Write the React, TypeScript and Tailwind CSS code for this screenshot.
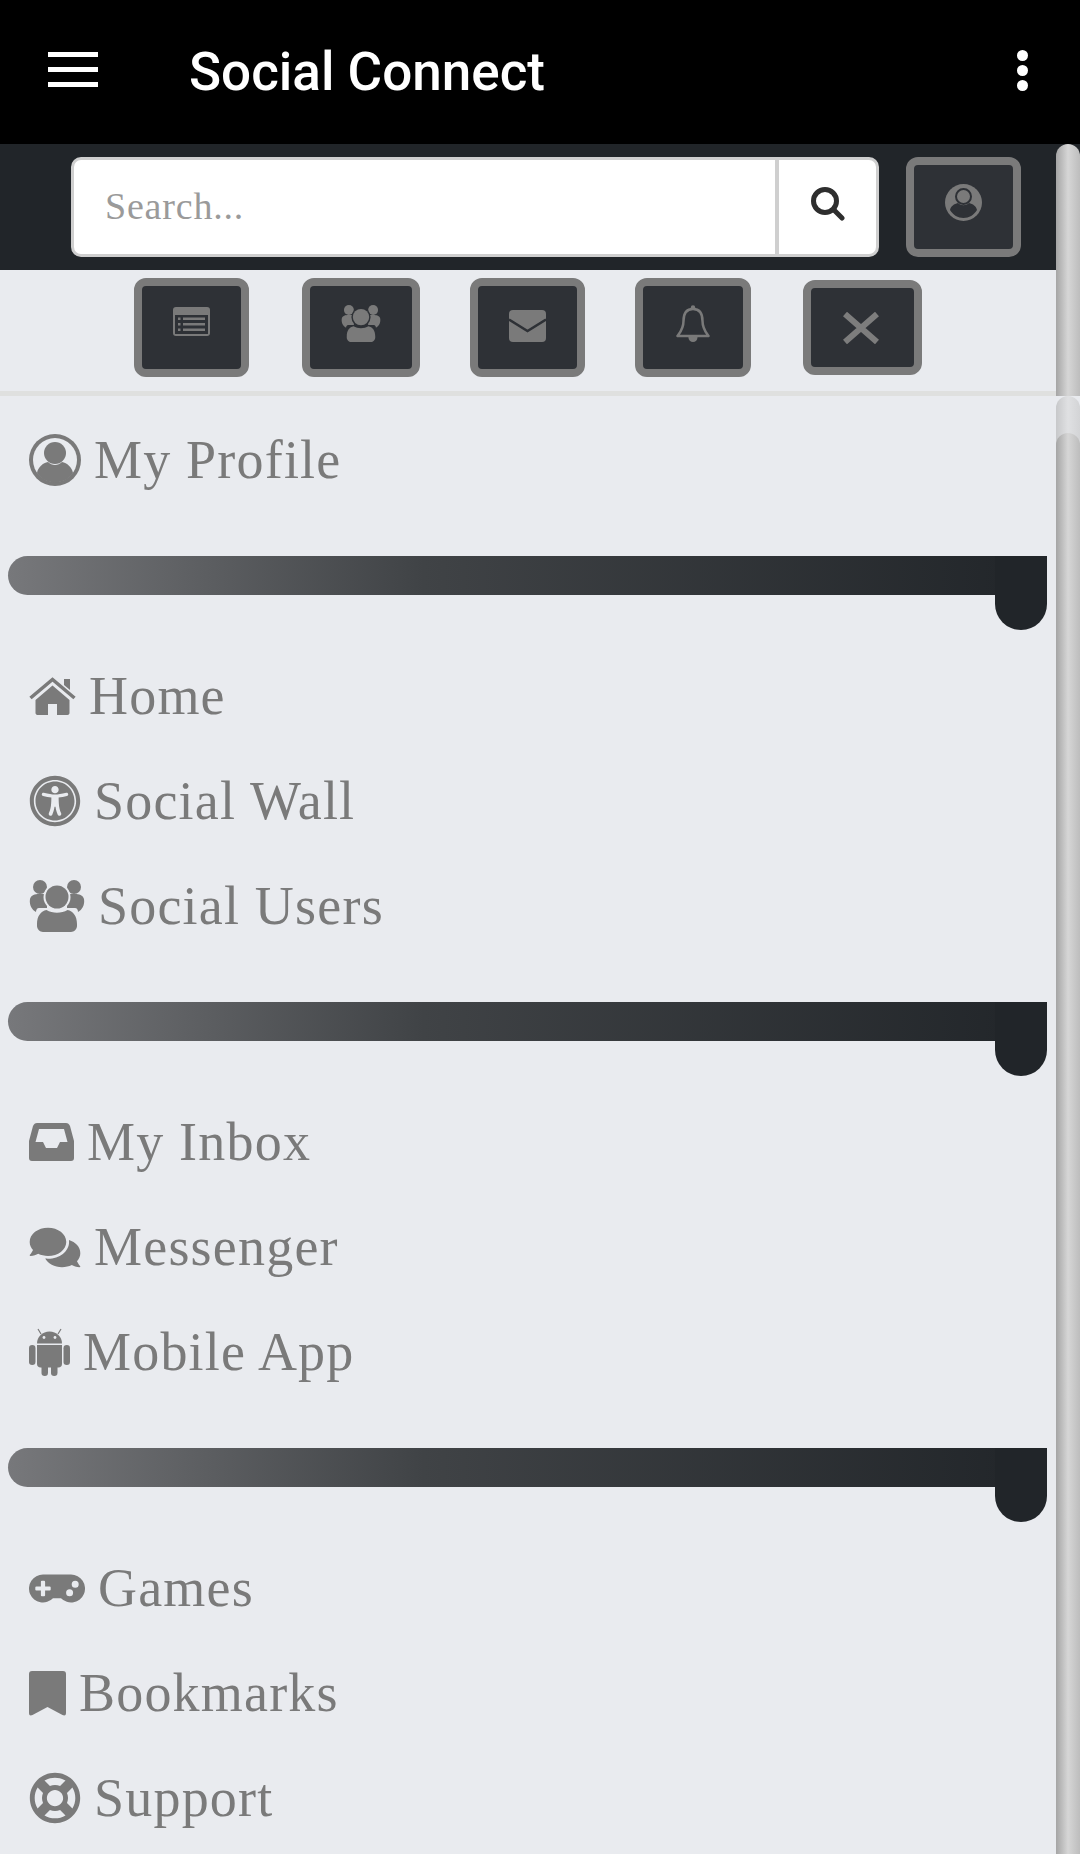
import React from "react";
import { FaUniversalAccess, FaComments, FaGamepad, FaRegLifeRing } from "react-icons/fa";

type P = { className?: string; gap?: string };

const PAGE = "#e9ebef";
const BTN = "#2e3136";

const Users = ({ className, gap = PAGE }: P) => (
  <svg viewBox="0 0 56 52" className={className} fill="currentColor">
    <circle cx="11" cy="7" r="7" />
    <circle cx="45" cy="7" r="7" />
    <path d="M1 19c1-4 5-5 9-5h8v14H10c-2 0-3 2-3 4-4-2-7-7-6-13zM55 19c-1-4-5-5-9-5h-8v14h8c2 0 3 2 3 4 4-2 7-7 6-13z" />
    <circle cx="28" cy="17" r="13.500" fill={gap} />
    <circle cx="28" cy="17" r="11.500" />
    <path d="M6 50V42c0-8 5-13 11-14 6 4 16 4 22 0 6 1 11 6 11 14v8z" fill={gap} />
    <path d="M8 44c0-8 4-13 9.500-14 6 3.500 15 3.500 21 0 5.500 1 9.500 6 9.500 14v2c0 3-3 6-6 6H14c-3 0-6-3-6-6z" />
  </svg>
);

const ListCard = ({ className, gap = BTN }: P) => (
  <svg viewBox="0 0 37 29" className={className}>
    <rect width="37" height="29" rx="3" fill="currentColor" />
    <rect x="2" y="8" width="33" height="19" fill={gap} />
    <g fill="currentColor">
      <rect x="5" y="10.500" width="2.500" height="2.500" />
      <rect x="5" y="16" width="2.500" height="2.500" />
      <rect x="5" y="21.500" width="2.500" height="2.500" />
      <rect x="10" y="10.500" width="22" height="2.500" />
      <rect x="10" y="16" width="22" height="2.500" />
      <rect x="10" y="21.500" width="22" height="2.500" />
    </g>
  </svg>
);

const Profile = ({ className, gap = PAGE }: P) => (
  <svg viewBox="0 0 52 52" className={className} fill="currentColor">
    <circle cx="26" cy="26" r="26" />
    <circle cx="26" cy="26" r="22" fill={gap} />
    <circle cx="26" cy="19" r="11" />
    <path d="M8 39c1-6 6-10 11-11 4 4 10 4 14 0 5 1 10 5 11 11-4 6-11 9.500-18 9.500S12 45 8 39z" />
  </svg>
);

const ProfileSmall = ({ className, gap = BTN }: P) => (
  <svg viewBox="0 0 37 37" className={className}>
    <circle cx="18.500" cy="18.500" r="18.500" fill="currentColor" />
    <circle cx="18.500" cy="12.500" r="7.500" fill="none" stroke={gap} strokeWidth="2" />
    <path d="M5 26c1-4 4-6 8-7 3 3 8 3 11 0 4 1 7 3 8 7-3 5-8 8-13.500 8S8 31 5 26z" fill={gap} />
  </svg>
);

const Home = ({ className }: P) => (
  <svg viewBox="0 0 47 38" className={className} fill="currentColor">
    <path d="M35 2h6v11l-6-5z" />
    <path d="M1.500 21L23.500 2.500l22 18.500" fill="none" stroke="currentColor" strokeWidth="3.500" />
    <path d="M6.500 23L23.500 8.500 40.500 23v13c0 1-1 2-2 2H28V27h-9v11H8.500c-1 0-2-1-2-2z" />
  </svg>
);

const Inbox = ({ className }: P) => (
  <svg viewBox="0 0 45 38" className={className} fill="currentColor">
    <path
      fillRule="evenodd"
      d="M8 0h29c2 0 3 1 4 3l4 15v17c0 2-1 3-3 3H3c-2 0-3-1-3-3V18L4 3c1-2 2-3 4-3zM10 6L6.500 19H14l3 6h11l3-6h7.500L35 6z"
    />
  </svg>
);

const Android = ({ className, gap = PAGE }: P) => (
  <svg viewBox="0 0 41 48" className={className} fill="currentColor">
    <path d="M12 6L9 1M29 6l3-5" stroke="currentColor" strokeWidth="1.200" />
    <path d="M8 15.500C8 8.500 13.500 3.500 20.500 3.500S33 8.500 33 15.500z" />
    <circle cx="15" cy="9.500" r="1.400" fill={gap} />
    <circle cx="26" cy="9.500" r="1.400" fill={gap} />
    <rect x="0" y="17" width="6.500" height="20" rx="3.200" />
    <rect x="34.500" y="17" width="6.500" height="20" rx="3.200" />
    <path d="M8 17h25v19c0 2-1.500 3.500-3.500 3.500h-18C9.500 39.500 8 38 8 36z" />
    <rect x="12.500" y="36" width="6.500" height="12" rx="3.200" />
    <rect x="22" y="36" width="6.500" height="12" rx="3.200" />
  </svg>
);

const Bookmark = ({ className }: P) => (
  <svg viewBox="0 0 37 45" className={className} fill="currentColor">
    <path d="M3 0h31c2 0 3 1 3 3v39c0 2.500-1.500 3-3.500 2L18.500 36 3.500 44C1.500 45 0 44.500 0 42V3c0-2 1-3 3-3z" />
  </svg>
);

const Envelope = ({ className, gap = BTN }: P) => (
  <svg viewBox="0 0 37 32" className={className}>
    <rect width="37" height="32" rx="4" fill="currentColor" />
    <path d="M0 9.500L18.500 21 37 9.500" fill="none" stroke={gap} strokeWidth="2.500" />
  </svg>
);

const Bell = ({ className }: P) => (
  <svg viewBox="0 0 34 37" className={className}>
    <circle cx="17" cy="2.500" r="2.200" fill="currentColor" />
    <circle cx="17" cy="32.500" r="4.500" fill="currentColor" />
    <path
      d="M17 4C10 4 7.500 9.500 7.500 16 7.500 24 3.500 28 1.500 31h31c-2-3-6-7-6-15 0-6.500-2.500-12-9.500-12z"
      fill={BTN}
      stroke="currentColor"
      strokeWidth="2.500"
      strokeLinejoin="round"
    />
  </svg>
);

const SideButton = ({ children, className }: { children: React.ReactNode; className: string }) => (
  <button className={`flex items-center justify-center rounded-[12px] border-[8px] border-[#7a7a7a] bg-[#2e3136] text-[#7a7a7a] ${className}`}>
    {children}
  </button>
);

const Divider = () => (
  <div className="relative ml-2 h-[39px] w-[1039px] rounded-l-[20px] bg-gradient-to-r from-[#77787b] via-[#404346] via-40% to-[#212529]">
    <div className="absolute right-0 top-0 h-[74px] w-[52px] rounded-b-[26px] bg-[#212529]" />
  </div>
);

const Item = ({ icon, label }: { icon: React.ReactNode; label: string }) => (
  <a className="flex h-[105px] items-center gap-[13px] pb-[3px] pl-[29px] text-[#7a7a7a]">
    {icon}
    <span className="font-['Liberation_Serif',serif] text-[54px] leading-none tracking-[1.2px] text-[#7a7a7a]">{label}</span>
  </a>
);

const Thumb = ({ className }: { className: string }) => (
  <div className={`rounded-t-[14px] bg-gradient-to-r from-[#a5a5a5] via-[#d6d6d6] to-[#bdbdbd] ${className}`} />
);

export default function App() {
  return (
    <div className="h-[1854px] w-[1080px] overflow-hidden bg-[#e9ebef]">
      <header className="flex h-[144px] items-center bg-black text-white">
        <div className="mb-[5px] ml-[48px] flex w-[50px] flex-col gap-[10px]">
          <span className="h-[5px] bg-white" />
          <span className="h-[5px] bg-white" />
          <span className="h-[5px] bg-white" />
        </div>
        <h1 className="ml-[91px] font-['Roboto',sans-serif] text-[53px] font-medium leading-none">Social Connect</h1>
        <div className="mb-[3px] ml-auto mr-[52px] flex flex-col gap-[4px]">
          <span className="h-[11px] w-[11px] rounded-full bg-white" />
          <span className="h-[11px] w-[11px] rounded-full bg-white" />
          <span className="h-[11px] w-[11px] rounded-full bg-white" />
        </div>
      </header>

      <div className="flex h-[252px] bg-[#212529]">
        <div className="w-[1056px]">
          <div className="flex h-[126px] items-center bg-[#212529] pl-[71px]">
            <div className="flex h-[100px] w-[808px] overflow-hidden rounded-[10px] border-[3px] border-[#cfcfcf] bg-white">
              <div className="flex flex-1 items-center pb-[2px] pl-[31px] font-['Liberation_Serif',serif] text-[38px] tracking-[0.8px] text-[#9a9a9a]">Search...</div>
              <div className="flex w-[101px] items-center justify-center border-l-[4px] border-[#cfcfcf]">
                <svg viewBox="0 0 34 34" className="mb-[6px] h-[34px] w-[34px]" fill="none" stroke="#2e2e2e" strokeWidth="5">
                  <circle cx="14" cy="14" r="11.500" />
                  <path d="M22.500 22.500L31 31" strokeLinecap="round" />
                </svg>
              </div>
            </div>
            <SideButton className="ml-[27px] h-[100px] w-[115px]">
              <ProfileSmall className="mb-[10px] h-[37px] w-[37px]" />
            </SideButton>
          </div>
          <div className="flex h-[121px] items-start bg-[#e9ebef] pl-[134px] pt-[8px]">
            <SideButton className="h-[99px] w-[115px]"><ListCard className="mb-[12px] h-[29px] w-[37px]" /></SideButton>
            <SideButton className="ml-[53px] h-[99px] w-[118px]"><Users gap={BTN} className="mb-[8px] h-[37px] w-[40px]" /></SideButton>
            <SideButton className="ml-[50px] h-[99px] w-[115px]"><Envelope className="mb-[4px] h-[32px] w-[37px]" /></SideButton>
            <SideButton className="ml-[50px] h-[99px] w-[116px]"><Bell className="mb-[8px] h-[37px] w-[34px]" /></SideButton>
            <SideButton className="ml-[52px] mt-[2px] h-[95px] w-[119px]">
              <svg viewBox="0 0 36 32" className="mr-[4px] h-[32px] w-[36px] text-[#7d7d7d]" stroke="currentColor" strokeWidth="6"><path d="M2 2L34 30M34 2L2 30" /></svg>
            </SideButton>
          </div>
          <div className="h-[5px] bg-[#dfe0df]" />
        </div>
        <Thumb className="h-[252px] w-[24px]" />
      </div>

      <div className="flex">
        <nav className="w-[1056px] pt-[13px]">
          <Item icon={<Profile className="h-[52px] w-[52px]" />} label="My Profile" />
          <div className="mb-[50px] mt-[42px]"><Divider /></div>
          <Item icon={<Home className="h-[38px] w-[47px]" />} label="Home" />
          <Item icon={<FaUniversalAccess className="h-[52px] w-[52px]" />} label="Social Wall" />
          <Item icon={<Users className="h-[52px] w-[56px]" />} label="Social Users" />
          <div className="mb-[50px] mt-[42px]"><Divider /></div>
          <Item icon={<Inbox className="h-[38px] w-[45px]" />} label="My Inbox" />
          <Item icon={<FaComments className="h-[45px] w-[52px]" />} label="Messenger" />
          <Item icon={<Android className="h-[48px] w-[41px]" />} label="Mobile App" />
          <div className="mb-[50px] mt-[42px]"><Divider /></div>
          <Item icon={<FaGamepad className="h-[45px] w-[56px]" />} label="Games" />
          <Item icon={<Bookmark className="h-[45px] w-[37px]" />} label="Bookmarks" />
          <Item icon={<FaRegLifeRing className="h-[52px] w-[52px]" />} label="Support" />
        </nav>
        <div className="relative h-[1458px] w-[24px]">
          <Thumb className="absolute inset-x-0 top-0 h-[60px] opacity-50" />
          <Thumb className="absolute inset-x-0 top-[37px] h-[1421px]" />
        </div>
      </div>
    </div>
  );
}
